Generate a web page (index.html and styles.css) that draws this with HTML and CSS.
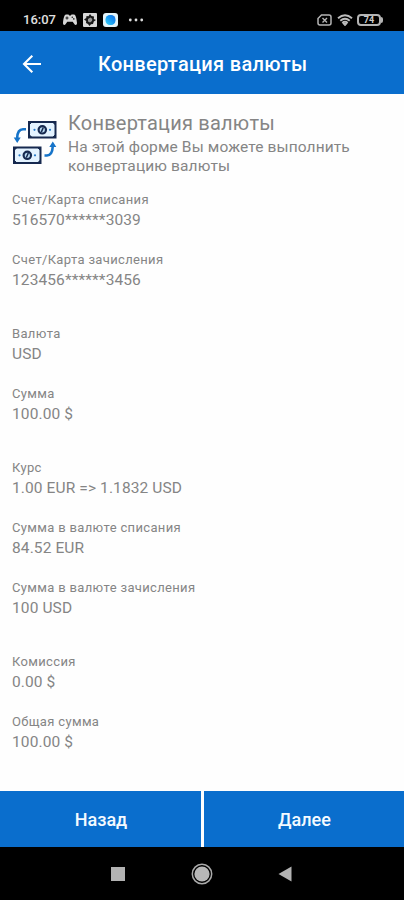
FILE: index.html
```html
<!DOCTYPE html>
<html lang="ru">
<head>
<meta charset="utf-8">
<meta name="viewport" content="width=device-width, initial-scale=1">
<title>Конвертация валюты</title>
<link rel="stylesheet" href="styles.css">
</head>
<body>
<div class="status">
  <span class="time">16:07</span>
  <svg class="pad" width="16" height="14" viewBox="0 0 16 14"><path d="M4 1.500h2.500l.7 1h1.600l.7-1H12c1.800 0 2.800 5 3 8.500.1 2.200-1.800 2.500-2.700 1L10.700 8.700H5.300L3.700 11C2.800 12.500.9 12.200 1 10 1.200 6.500 2.200 1.500 4 1.500z" fill="#d6d6d6"/><path d="M5 3.500v3M3.500 5h3" stroke="#222" stroke-width="1.100"/><circle cx="10.300" cy="4.300" r=".8" fill="#222"/><circle cx="11.800" cy="5.900" r=".8" fill="#222"/></svg>
  <svg class="app" width="14" height="14" viewBox="0 0 14 14"><rect width="14" height="14" rx="1" fill="#d8d8d8"/><path d="M7 1l1.500 2L11 3.500 10.800 6 13 7l-2.200 1.500L10 11l-2 .3L6.500 13 5 11l-2-1 .2-2L1 6.500 3.200 5 3.500 3l2 .2z" fill="#171717"/><path d="M5 8.500V6l2.500-1.500L9.300 6 9 8 7 9.500z" fill="#999"/></svg>
  <svg class="app2" width="15" height="14" viewBox="0 0 15 14"><defs><linearGradient id="g" x1="0" y1="1" x2="1" y2="0"><stop offset="0" stop-color="#35d3f5"/><stop offset=".55" stop-color="#1595f2"/><stop offset="1" stop-color="#176be0"/></linearGradient></defs><rect width="15" height="14" rx="3" fill="#e4f5fa"/><rect x="2.500" y="2" width="10" height="10" rx="4.500" fill="url(#g)"/></svg>
  <svg class="dots" width="16" height="4" viewBox="0 0 16 4" fill="#ddd"><circle cx="2.300" cy="2" r="1.400"/><circle cx="8" cy="2" r="1.400"/><circle cx="13.700" cy="2" r="1.400"/></svg>
  <svg class="sim" width="15" height="12" viewBox="0 0 15 12" fill="none" stroke="#b4b4b4"><path d="M4.500 1H12q2 0 2 2v6q0 2-2 2H3q-2 0-2-2V4.500z" stroke-width="1.500"/><path d="M5.500 4l4.500 4.500M10 4L5.500 8.500" stroke-width="1.400"/></svg>
  <svg class="wifi" width="16" height="13" viewBox="0 0 16 13" fill="none" stroke="#bdbdbd" stroke-width="1.900"><path d="M1 4.300q7-6 14 0M3.300 6.800q4.700-4 9.400 0M5.300 9q2.700-2.300 5.400 0"/><path d="M6 9.500h4l-2 2.300z" fill="#bdbdbd" stroke-width="1"/></svg>
  <span class="battery"><span class="level">74</span></span>
</div>
<header class="bar">
  <svg width="20" height="20" viewBox="0 0 20 20" fill="none" stroke="#fff" stroke-width="2.100"><path d="M10.300 1.700L2 10l8.300 8.300M2.300 10H19"/></svg>
  <h1>Конвертация валюты</h1>
</header>
<main>
  <section class="intro">
    <svg width="46" height="46" viewBox="0 0 46 46">
      <defs><g id="note"><rect x="1" y="1" width="26.500" height="15.500" fill="#e4f3ff" stroke="#16294f" stroke-width="2"/><path d="M1 1h3L1 4zM27.500 1v3l-3-3zM1 16.500v-3l3 3zM27.500 16.500h-3l3-3z" fill="#16294f" stroke="#16294f"/><circle cx="14.300" cy="8.800" r="3.700" fill="#b9daf2" stroke="#16294f" stroke-width="2.200"/><path d="M15.300 6.500l-2 4.600" fill="none" stroke="#16294f" stroke-width="1.500"/><circle cx="6.500" cy="8.800" r="1.100" fill="#2377c5"/><circle cx="22" cy="8.800" r="1.100" fill="#2377c5"/></g></defs>
      <use href="#note" x="16" y="1"/><use href="#note" x="1" y="26.500"/>
      <path d="M14 9.200h-3Q5.400 9.200 5.200 18M32.500 35.500H35q5.300 0 5.800-9.500" fill="none" stroke="#1674c9" stroke-width="2.600"/><path d="M1.700 17.500h7L5.200 23zM37.300 27h7l-3.500-5.500z" fill="#1674c9"/>
    </svg>
    <div class="copy"><h2>Конвертация валюты</h2><p>На этой форме Вы можете выполнить<br>конвертацию валюты</p></div>
  </section>
  <dl class="group">
    <div><dt>Счет/Карта списания</dt><dd>516570******3039</dd></div>
    <div><dt>Счет/Карта зачисления</dt><dd>123456******3456</dd></div>
  </dl>
  <dl class="group">
    <div><dt>Валюта</dt><dd>USD</dd></div>
    <div><dt>Сумма</dt><dd>100.00 $</dd></div>
  </dl>
  <dl class="group">
    <div><dt>Курс</dt><dd>1.00 EUR =&gt; 1.1832 USD</dd></div>
    <div><dt>Сумма в валюте списания</dt><dd>84.52 EUR</dd></div>
    <div><dt>Сумма в валюте зачисления</dt><dd>100 USD</dd></div>
  </dl>
  <dl class="group">
    <div><dt>Комиссия</dt><dd>0.00 $</dd></div>
    <div><dt>Общая сумма</dt><dd>100.00 $</dd></div>
  </dl>
</main>
<div class="actions"><button>Назад</button><button>Далее</button></div>
<nav class="system">
  <svg width="14" height="14" viewBox="0 0 14 14"><rect width="14" height="14" fill="#b2b2b2"/></svg>
  <svg width="22" height="22" viewBox="0 0 22 22"><circle cx="11" cy="11" r="9.700" fill="none" stroke="#aaa" stroke-width="1.500"/><circle cx="11" cy="11" r="7.600" fill="#b8b8b8"/></svg>
  <svg class="back" width="14" height="16" viewBox="0 0 14 16"><path d="M13.500 .5v15L.5 8z" fill="#b2b2b2"/></svg>
</nav>
</body>
</html>
```

FILE: styles.css
```css
* { box-sizing: border-box; margin: 0; }
body {
  width: 404px;
  height: 900px;
  display: flex;
  flex-direction: column;
  overflow: hidden;
  background: #fefefe;
  color: #858585;
  font-family: Roboto, "Noto Sans", sans-serif;
}
svg { display: block; flex: none; }
.status {
  height: 31px;
  flex: none;
  display: flex;
  align-items: center;
  padding: 9px 20px 0 23px;
  background: #000;
}
.time { width: 33px; color: #e0e0e0; font-size: 13px; font-weight: 500; line-height: 16px; letter-spacing: 0; }
.pad { margin-left: 6px; }
.app { margin-left: 5px; }
.app2 { margin-left: 6px; }
.dots { margin-left: 10px; }
.sim { margin-left: auto; }
.wifi { margin-left: 5px; }
.battery {
  position: relative;
  width: 24px;
  height: 12px;
  margin: 0 3px 0 4px;
  border: 2px solid #b4b4b4;
  border-radius: 4px;
  display: flex;
  justify-content: center;
  align-items: center;
}
.battery::after {
  content: "";
  position: absolute;
  right: -4px;
  top: 1px;
  width: 2px;
  height: 6px;
  background: #b4b4b4;
  border-radius: 0 2px 2px 0;
}
.level { color: #ccc; font-size: 9px; font-weight: 700; line-height: 9px; }
.bar {
  height: 63px;
  flex: none;
  display: flex;
  align-items: center;
  gap: 56px;
  padding: 2px 22px 0;
  background: #0a6ecd;
  color: #fff;
}
.bar h1 { font-size: 20px; line-height: 24px; font-weight: 500; letter-spacing: 0.3px; white-space: nowrap; }
main { flex: 1; min-height: 0; padding: 17px 12px 0; }
.intro { height: 79px; display: flex; gap: 10px; white-space: nowrap; }
.intro > svg { margin-top: 9px; }
.copy h2 { font-size: 20px; line-height: 25px; font-weight: 400; letter-spacing: 0.22px; }
.copy p { margin-top: 2px; font-size: 15.5px; line-height: 19px; letter-spacing: 0.12px; }
.group { display: grid; gap: 20px; }
.group + .group { margin-top: 34px; }
dt { font-size: 13px; line-height: 20px; letter-spacing: 0.34px; }
dd { font-size: 15.5px; line-height: 20px; letter-spacing: 0.11px; }
.actions { height: 56px; flex: none; display: grid; grid-template-columns: 201px 1fr; gap: 3px; }
.actions button {
  border: 0;
  padding: 1px 0 0 1px;
  background: #0a6ecd;
  color: #f4faff;
  font: 500 18px/24px Roboto, "Noto Sans", sans-serif;
}
.system {
  height: 53px;
  flex: none;
  display: flex;
  align-items: center;
  gap: 66px;
  padding-left: 111px;
  background: #000;
}
.back { margin-left: -1px; }
```
